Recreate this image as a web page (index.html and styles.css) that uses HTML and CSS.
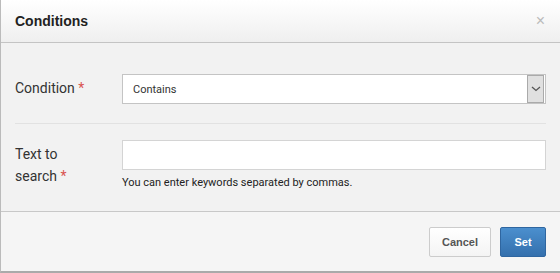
FILE: index.html
```html
<!DOCTYPE html>
<html lang="en">
<head>
    <meta charset="UTF-8">
    <meta name="viewport" content="width=device-width, initial-scale=1.0">
    <title>Conditions</title>
    <link rel="stylesheet" href="styles.css">
</head>
<body>

    <div class="modal">
        <div class="modal-header">
            <h3 class="modal-title">Conditions</h3>
            <span class="close">&times;</span>
        </div>

        <div class="modal-body">
            <div class="form-row">
                <label class="form-label">Condition <span class="req">*</span></label>
                <div class="form-field">
                    <div class="select-box">
                        <span class="select-value">Contains</span>
                        <span class="select-arrow">
                            <svg width="10" height="6" viewBox="0 0 10 6"><path d="M1 1 L5 4.5 L9 1" fill="none" stroke="#555" stroke-width="1.3"/></svg>
                        </span>
                    </div>
                </div>
            </div>

            <div class="form-row">
                <label class="form-label">Text to<br>search <span class="req">*</span></label>
                <div class="form-field">
                    <input type="text" class="text-input">
                    <p class="help">You can enter keywords separated by commas.</p>
                </div>
            </div>
        </div>

        <div class="modal-footer">
            <button class="btn btn-default">Cancel</button>
            <button class="btn btn-primary">Set</button>
        </div>
    </div>

</body>
</html>
```

FILE: styles.css
```css
body {
    margin: 0;
    padding: 0;
    font-family: Roboto, "Liberation Sans", Arial, sans-serif;
    background-color: #fff;
}

.modal {
    width: 560px;
    height: 273px;
    box-sizing: border-box;
    border-left: 1px solid #bbb;
    border-bottom: 2px solid #aaa;
    display: flex;
    flex-direction: column;
}

.modal-header {
    height: 43px;
    flex-shrink: 0;
    box-sizing: border-box;
    display: flex;
    align-items: center;
    justify-content: space-between;
    padding: 0 15px 0 14px;
    background: linear-gradient(#fff, #efefef);
    border-bottom: 1px solid #c4c4c4;
}

.modal-title {
    margin: 0;
    font-family: "Liberation Sans", Arial, sans-serif;
    font-size: 14px;
    font-weight: bold;
    color: #222;
}

.close {
    font-size: 16px;
    color: #bbb;
    font-family: "Liberation Sans", Arial, sans-serif;
}

.modal-body {
    height: 169px;
    flex-shrink: 0;
    box-sizing: border-box;
    background-color: #f2f2f2;
    padding: 31px 14px 0 14px;
    border-bottom: 1px solid #c8c8c8;
}

.form-row {
    display: flex;
}

.form-row + .form-row {
    border-top: 1px solid #e2e2e2;
    margin-top: 19px;
    padding-top: 16px;
}

.form-label {
    width: 107px;
    font-size: 14px;
    line-height: 22px;
    color: #333;
    padding-top: 3px;
}

.req {
    color: #d9534f;
}

.form-field {
    flex: 1;
}

.select-box {
    height: 30px;
    box-sizing: border-box;
    background: #fff;
    border: 1px solid #c4c4c4;
    display: flex;
    align-items: center;
}

.select-value {
    flex: 1;
    padding-left: 10px;
    font-size: 11px;
    color: #333;
}

.select-arrow {
    width: 15px;
    height: 26px;
    margin-right: 1px;
    background: #e0e0e0;
    border: 1px solid #aaa;
    display: flex;
    align-items: center;
    justify-content: center;
}

.text-input {
    display: block;
    width: 100%;
    height: 30px;
    box-sizing: border-box;
    border: 1px solid #d4d4d4;
    background: #fff;
    margin: 0;
}

.help {
    margin: 6px 0 0 0;
    font-size: 11px;
    color: #222;
}

.modal-footer {
    flex: 1;
    background-color: #f5f5f5;
    display: flex;
    justify-content: flex-end;
    align-items: center;
    gap: 9px;
    padding: 0 14px 0 0;
}

.btn {
    height: 30px;
    font-family: "Liberation Sans", Arial, sans-serif;
    font-size: 11px;
    font-weight: bold;
    border-radius: 2px;
    cursor: pointer;
}

.btn-default {
    width: 62px;
    background: linear-gradient(#fff, #f4f4f4);
    border: 1px solid #ccc;
    color: #555;
}

.btn-primary {
    width: 46px;
    background: linear-gradient(#4b8fce, #3470ad);
    border: 1px solid #2f66a0;
    color: #fff;
}
```
